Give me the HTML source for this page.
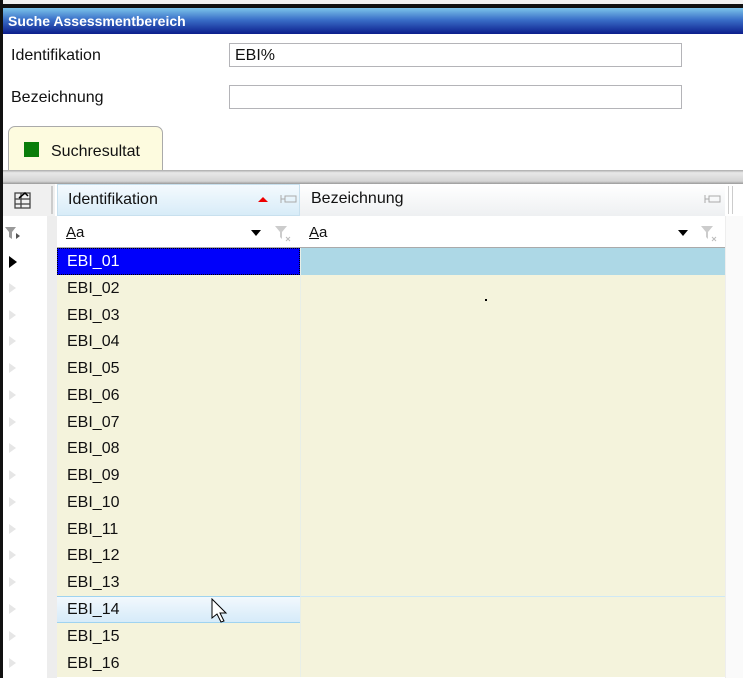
<!DOCTYPE html>
<html><head><meta charset="utf-8"><style>
*{margin:0;padding:0;box-sizing:border-box}
body{width:743px;height:678px;overflow:hidden;background:#fff;font-family:"Liberation Sans",Arial,sans-serif;position:relative;font-size:16px;color:#111}
.a{position:absolute}
.row{position:absolute;left:0;width:743px;height:27px}
.row .tri{position:absolute;left:9px;top:8px;width:0;height:0;border-top:5px solid transparent;border-bottom:5px solid transparent;border-left:7px solid #e6e6e6}
.row .id{position:absolute;left:57px;width:243px;height:100%;background:#f4f3dc;padding-left:10px;line-height:28px}
.row .bz{position:absolute;left:300px;width:425px;height:100%;background:#f4f3dc;border-left:1px solid #e8efe8}
</style></head><body>
<div class="a" style="left:0;top:0;width:743px;height:4px;background:#f2f2f2"></div>
<div class="a" style="left:0;top:4px;width:743px;height:4px;background:#111"></div>
<div class="a" style="left:0;top:0;width:3px;height:678px;background:#111"></div>
<div class="a" style="left:3px;top:8px;width:740px;height:26px;background:linear-gradient(#7cc4ea,#3a6fc8 45%,#0c1e8c);color:#fff;font-weight:bold;font-size:14px;line-height:26px;padding-left:5px">Suche Assessmentbereich</div>
<div class="a" style="left:11px;top:47px">Identifikation</div>
<div class="a" style="left:229px;top:43px;width:453px;height:24px;border:1px solid #b4b4b8;padding-left:5px;line-height:23px">EBI%</div>
<div class="a" style="left:11px;top:89px">Bezeichnung</div>
<div class="a" style="left:229px;top:85px;width:453px;height:24px;border:1px solid #b4b4b8"></div>
<div class="a" style="left:8px;top:126px;width:155px;height:46px;background:#fdfbdf;border:1px solid #aaa;border-bottom:none;border-radius:7px 7px 0 0"></div>
<div class="a" style="left:24px;top:142px;width:15px;height:15px;background:#0a7d0a"></div>
<div class="a" style="left:51px;top:143px">Suchresultat</div>
<div class="a" style="left:3px;top:170px;width:740px;height:14px;background:linear-gradient(#aaa,#e8e8e8 20%,#d4d4d4 80%,#999)"></div>
<div class="a" style="left:3px;top:184px;width:52px;height:32px;background:#f0f0f0"></div>
<svg class="a" style="left:12px;top:190px" width="24" height="22"><g fill="none" stroke="#444" stroke-width="1.3"><rect x="3" y="3" width="15" height="15"/><line x1="3" y1="9" x2="18" y2="9"/><line x1="3" y1="14" x2="18" y2="14"/><line x1="9" y1="3" x2="9" y2="18"/></g><path d="M7 8 L13 3 L16 6" stroke="#000" stroke-width="1.5" fill="none"/></svg>
<div class="a" style="left:51px;top:186px;width:2px;height:28px;border-left:1px solid #ccc;border-right:1px solid #ccc"></div>
<div class="a" style="left:57px;top:184px;width:243px;height:32px;background:linear-gradient(#f4fafe,#d8ecf8);border:1px solid #c8e0ee;padding-left:10px;line-height:29px">Identifikation</div>
<div class="a" style="left:258px;top:197px;width:0;height:0;border-left:5px solid transparent;border-right:5px solid transparent;border-bottom:5px solid #e00"></div>
<svg class="a" style="left:280px;top:193px" width="18" height="12"><path d="M1 2v8M1 6h4M5 3h11v6H5z" fill="none" stroke="#aaa"/></svg>
<div class="a" style="left:300px;top:184px;width:425px;height:32px;background:linear-gradient(#fff,#eef0f2);padding-left:11px;line-height:29px">Bezeichnung</div>
<svg class="a" style="left:704px;top:193px" width="18" height="12"><path d="M1 2v8M1 6h4M5 3h11v6H5z" fill="none" stroke="#aaa"/></svg>
<div class="a" style="left:728px;top:186px;width:5px;height:28px;border-left:1px solid #ccc;border-right:1px solid #ccc"></div>
<svg class="a" style="left:4px;top:226px" width="18" height="16"><path d="M1 1h11l-4 5v7l-3-2v-5z" fill="#999"/><path d="M12 7l4 3-4 3z" fill="#555"/></svg>
<div class="a" style="left:47px;top:216px;width:10px;height:462px;background:#ededed"></div>
<div class="a" style="left:57px;top:216px;width:668px;height:32px;background:#fff;border-bottom:1px solid #aaa"></div>
<div class="a" style="left:66px;top:224px;font-size:15px"><u>A</u>a</div>
<div class="a" style="left:309px;top:224px;font-size:15px"><u>A</u>a</div>
<div class="a" style="left:251px;top:230px;border-left:5px solid transparent;border-right:5px solid transparent;border-top:6px solid #000"></div>
<div class="a" style="left:678px;top:230px;border-left:5px solid transparent;border-right:5px solid transparent;border-top:6px solid #000"></div>
<svg class="a" style="left:274px;top:225px" width="18" height="18"><path d="M1 1h12l-5 6v7l-2-2v-5z" fill="#ccc"/><path d="M12 12l4 4M16 12l-4 4" stroke="#bbb"/></svg>
<svg class="a" style="left:700px;top:225px" width="18" height="18"><path d="M1 1h12l-5 6v7l-2-2v-5z" fill="#ccc"/><path d="M12 12l4 4M16 12l-4 4" stroke="#bbb"/></svg>
<div class="a" style="left:725px;top:216px;width:18px;height:462px;background:#fafafa;border-left:1px solid #eee"></div>

<div class="row" style="top:248px"><div class="a" style="left:9px;top:8px;border-top:6px solid transparent;border-bottom:6px solid transparent;border-left:8px solid #000"></div><div class="id" style="background:#0000fb;color:#fff;border:1px dotted #000;line-height:26px;padding-left:9px">EBI_01</div><div class="bz" style="background:#add8e6"></div></div>
<div class="row" style="top:275px"><div class="tri"></div><div class="id">EBI_02</div><div class="bz"></div></div>
<div class="row" style="top:302px"><div class="tri"></div><div class="id">EBI_03</div><div class="bz"></div></div>
<div class="row" style="top:328px"><div class="tri"></div><div class="id">EBI_04</div><div class="bz"></div></div>
<div class="row" style="top:355px"><div class="tri"></div><div class="id">EBI_05</div><div class="bz"></div></div>
<div class="row" style="top:382px"><div class="tri"></div><div class="id">EBI_06</div><div class="bz"></div></div>
<div class="row" style="top:409px"><div class="tri"></div><div class="id">EBI_07</div><div class="bz"></div></div>
<div class="row" style="top:435px"><div class="tri"></div><div class="id">EBI_08</div><div class="bz"></div></div>
<div class="row" style="top:462px"><div class="tri"></div><div class="id">EBI_09</div><div class="bz"></div></div>
<div class="row" style="top:489px"><div class="tri"></div><div class="id">EBI_10</div><div class="bz"></div></div>
<div class="row" style="top:516px"><div class="tri"></div><div class="id">EBI_11</div><div class="bz"></div></div>
<div class="row" style="top:542px"><div class="tri"></div><div class="id">EBI_12</div><div class="bz"></div></div>
<div class="row" style="top:569px"><div class="tri"></div><div class="id">EBI_13</div><div class="bz"></div></div>
<div class="row" style="top:596px"><div class="tri"></div><div class="id" style="background:linear-gradient(#f2f8fd,#d6ebf9);border-top:1px solid #9fd3f0;border-bottom:1px solid #9fd3f0;line-height:26px">EBI_14</div><div class="bz" style="border-top:1px solid #cfe8f5"></div></div>
<div class="row" style="top:623px"><div class="tri"></div><div class="id">EBI_15</div><div class="bz"></div></div>
<div class="row" style="top:650px"><div class="tri"></div><div class="id">EBI_16</div><div class="bz"></div></div>
<svg class="a" style="left:210px;top:598px" width="20" height="28"><path d="M2 1v19l5-4 4 8 3-1-4-8h6z" fill="#fff" stroke="#000" stroke-width="1"/></svg>
<div class="a" style="left:485px;top:299px;width:2px;height:2px;background:#000"></div>
</body></html>
